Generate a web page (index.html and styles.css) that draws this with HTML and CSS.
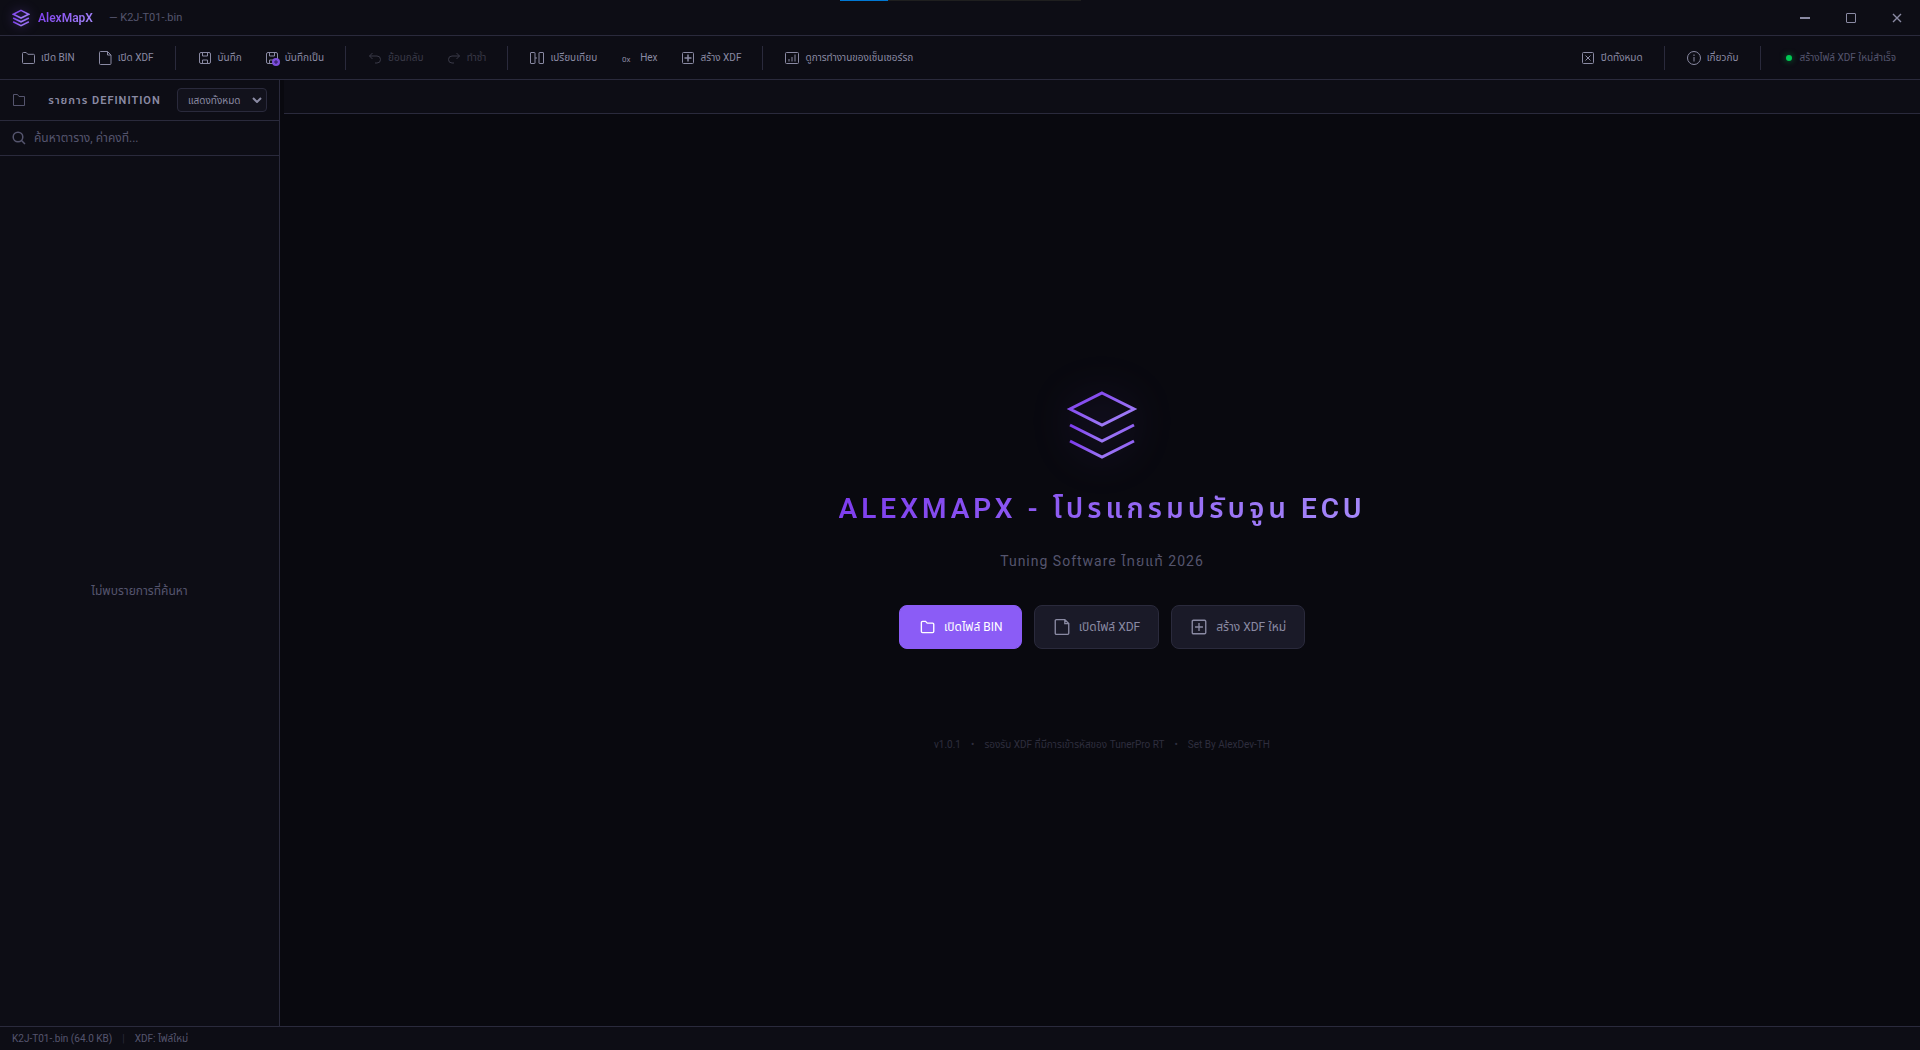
FILE: index.html
```html
<!DOCTYPE html>
<html lang="th">
<head>
    <meta charset="UTF-8">
    <meta name="viewport" content="width=device-width, initial-scale=1.0">
    <title>AlexMapX</title>
    <link rel="stylesheet" href="styles.css">
</head>
<body>
    <div class="capture-bar"><div class="capture-progress"></div></div>

    <header class="titlebar">
        <svg class="brand-logo" viewBox="0 0 80 80">
            <defs>
                <linearGradient id="brand" x1="0" y1="0" x2="1" y2="1">
                    <stop offset="0" stop-color="#7c3aed"/>
                    <stop offset="1" stop-color="#a78bfa"/>
                </linearGradient>
            </defs>
            <g fill="none" stroke="url(#brand)" stroke-width="7">
                <path d="M40 6L74 23L40 40L6 23Z"/>
                <path d="M5 40L40 57L75 40"/>
                <path d="M5 57L40 74L75 57"/>
            </g>
        </svg>
        <span class="brand-name">AlexMapX</span>
        <span class="file-name">— K2J-T01-.bin</span>
        <div class="window-controls">
            <button aria-label="ย่อ"><svg viewBox="0 0 10 10"><path d="M0 5H10" stroke-width="2"/></svg></button>
            <button aria-label="ขยาย"><svg viewBox="0 0 10 10"><rect x=".5" y=".5" width="9" height="9" rx=".5"/></svg></button>
            <button aria-label="ปิด"><svg viewBox="0 0 10 10"><path d="M1 1L9 9M9 1L1 9" stroke-width="1.4"/></svg></button>
        </div>
    </header>

    <nav class="toolbar">
        <button class="tool-btn">
            <svg viewBox="0 0 16 16"><path d="M2.500 3.500a1 1 0 0 1 1-1h2.700l1.600 1.800H13.500a1 1 0 0 1 1 1V12.500a1 1 0 0 1-1 1H3.500a1 1 0 0 1-1-1z"/></svg>
            เปิด BIN
        </button>
        <button class="tool-btn">
            <svg viewBox="0 0 16 16"><path d="M3.500 1.500h7L14 5V13.500a1 1 0 0 1-1 1H3.500a1 1 0 0 1-1-1v-11a1 1 0 0 1 1-1zM10.500 1.500V5H14"/></svg>
            เปิด XDF
        </button>
        <div class="divider"></div>
        <button class="tool-btn">
            <svg viewBox="0 0 16 16"><rect x="2.500" y="2.500" width="11" height="11" rx="1.500"/><path d="M5.500 2.500v3.500h5V2.500M5.500 13.500v-3.500h5v3.500"/></svg>
            บันทึก
        </button>
        <button class="tool-btn">
            <svg viewBox="0 0 16 16"><rect x="2.500" y="2.500" width="11" height="11" rx="1.500"/><path d="M5.500 2.500v3.500h5V2.500M5.500 13.500v-3.500h5v3.500"/><circle class="badge" cx="12" cy="12" r="4"/><path class="badge-plus" d="M12 10v4M10 12h4"/></svg>
            บันทึกเป็น
        </button>
        <div class="divider"></div>
        <button class="tool-btn" disabled>
            <svg viewBox="0 0 16 16"><path d="M5.500 3L2.500 6l3 3M2.500 6h7.500a3.500 3.500 0 0 1 0 7H8"/></svg>
            ย้อนกลับ
        </button>
        <button class="tool-btn" disabled>
            <svg viewBox="0 0 16 16"><path d="M10.500 3l3 3-3 3M13.500 6H6a3.500 3.500 0 0 0 0 7h2"/></svg>
            ทำซ้ำ
        </button>
        <div class="divider"></div>
        <button class="tool-btn">
            <svg viewBox="0 0 16 16"><rect x="1.500" y="2.500" width="4.500" height="11" rx=".5"/><rect x="10" y="2.500" width="4.500" height="11" rx=".5"/><path d="M6 8h2"/></svg>
            เปรียบเทียบ
        </button>
        <button class="tool-btn">
            <svg class="hex-icon" viewBox="0 0 16 16"><text x="3" y="12">0x</text></svg>
            Hex
        </button>
        <button class="tool-btn">
            <svg viewBox="0 0 16 16"><rect x="2.500" y="2.500" width="11" height="11" rx="1"/><path d="M8 4.500v7M4.500 8h7" stroke-width="1.500"/></svg>
            สร้าง XDF
        </button>
        <div class="divider"></div>
        <button class="tool-btn">
            <svg viewBox="0 0 16 16"><rect x="1.500" y="2.500" width="13" height="11" rx="1"/><path d="M5 11.500V9M8 11.500V7M11 11.500V4.500"/></svg>
            ดูการทำงานของเซ็นเซอร์รถ
        </button>

        <div class="toolbar-right">
            <button class="tool-btn">
                <svg viewBox="0 0 16 16"><rect x="2.500" y="2.500" width="11" height="11" rx="1"/><path d="M5.500 5.500l5 5M10.500 5.500l-5 5"/></svg>
                ปิดทั้งหมด
            </button>
            <div class="divider"></div>
            <button class="tool-btn">
                <svg viewBox="0 0 16 16"><circle cx="8" cy="8" r="6.500"/><path d="M8 7V11.500M8 4.500v1.500"/></svg>
                เกี่ยวกับ
            </button>
            <div class="divider"></div>
            <div class="status"><span class="status-dot"></span>สร้างไฟล์ XDF ใหม่สำเร็จ</div>
        </div>
    </nav>

    <div class="workspace">
        <aside class="sidebar">
            <div class="sidebar-header">
                <svg viewBox="0 0 14 14"><path d="M1.500 1.500H5.500L7 3.500H12.500V12.500H1.500z"/></svg>
                <h2>รายการ DEFINITION</h2>
                <div class="filter">
                    <select aria-label="ตัวกรอง"><option>แสดงทั้งหมด</option></select>
                    <svg viewBox="0 0 10 6"><path d="M1 1l4 4 4-4"/></svg>
                </div>
            </div>
            <label class="search">
                <svg viewBox="0 0 14 14"><circle cx="6" cy="6" r="4.800"/><path d="M9.500 9.500L13 13"/></svg>
                <input type="text" placeholder="ค้นหาตาราง, ค่าคงที่..." aria-label="ค้นหา">
            </label>
            <div class="empty">ไม่พบรายการที่ค้นหา</div>
        </aside>

        <main class="editor">
            <div class="tabs"></div>
            <section class="welcome">
                <svg class="welcome-logo" viewBox="0 0 80 80">
                    <g fill="none" stroke="url(#brand)" stroke-width="3">
                        <path d="M40 8L72 24L40 40L8 24Z"/>
                        <path d="M8 40L40 56L72 40"/>
                        <path d="M8 56L40 72L72 56"/>
                    </g>
                </svg>
                <h1>ALEXMAPX - โปรแกรมปรับจูน ECU</h1>
                <p class="subtitle">Tuning Software ไทยแท้ 2026</p>
                <div class="actions">
                    <button class="action-btn primary">
                        <svg viewBox="0 0 16 16"><path d="M3 4a1 1 0 0 1 1-1h2.700l1.500 1.600H13a1 1 0 0 1 1 1V12a1 1 0 0 1-1 1H4a1 1 0 0 1-1-1z"/></svg>
                        เปิดไฟล์ BIN
                    </button>
                    <button class="action-btn">
                        <svg viewBox="0 0 16 16"><path d="M3 1.500h7.500L14 5V13.500a1 1 0 0 1-1 1H3a1 1 0 0 1-1-1v-11a1 1 0 0 1 1-1zM10.500 1.500V5H14"/></svg>
                        เปิดไฟล์ XDF
                    </button>
                    <button class="action-btn">
                        <svg viewBox="0 0 16 16"><rect x="2" y="2" width="12" height="12" rx="1"/><path d="M8 4.500v7M4.500 8h7"/></svg>
                        สร้าง XDF ใหม่
                    </button>
                </div>
                <div class="version">
                    <span>v1.0.1</span><span>•</span><span>รองรับ XDF ที่มีการเข้ารหัสของ TunerPro RT</span><span>•</span><span>Set By AlexDev-TH</span>
                </div>
            </section>
        </main>
    </div>

    <footer class="statusbar">
        <span>K2J-T01-.bin (64.0 KB)</span>
        <span class="pipe">|</span>
        <span>XDF: ไฟล์ใหม่</span>
    </footer>
</body>
</html>
```
FILE: styles.css
```css
* {
    box-sizing: border-box;
}

body {
    margin: 0;
    height: 100vh;
    display: flex;
    flex-direction: column;
    background: #09090f;
    color: #8a8aa3;
    font-family: Roboto, "Noto Sans Thai", sans-serif;
    font-size: 10px;
    overflow: hidden;
}

button, input, select {
    font: inherit;
    color: inherit;
}

svg {
    flex-shrink: 0;
    fill: none;
    stroke: currentColor;
}

.capture-bar {
    position: absolute;
    top: 0;
    left: 840px;
    width: 241px;
    height: 1px;
    background: #1f1f1f;
}

.capture-progress {
    width: 20%;
    height: 1px;
    background: #0078d4;
}

.titlebar {
    display: flex;
    align-items: center;
    height: 36px;
    padding-left: 12px;
    background: #0d0d15;
    border-bottom: 1px solid #2a2a3c;
}

.brand-logo {
    width: 18px;
    height: 18px;
    filter: drop-shadow(0 0 6px rgba(139, 92, 246, 0.4));
}

.brand-name {
    margin-left: 8px;
    font-size: 12px;
    font-weight: 600;
    background: linear-gradient(135deg, #7c3aed, #a78bfa);
    -webkit-background-clip: text;
    background-clip: text;
    color: transparent;
}

.file-name {
    margin-left: 16px;
    font-size: 11px;
    color: #55556e;
}

.window-controls {
    display: flex;
    margin-left: auto;
    height: 100%;
}

.window-controls button {
    display: flex;
    align-items: center;
    justify-content: center;
    width: 46px;
    border: none;
    background: none;
}

.window-controls svg {
    width: 10px;
    height: 10px;
}

.toolbar {
    display: flex;
    align-items: center;
    gap: 6px;
    height: 44px;
    padding: 0 12px;
    background: #0d0d15;
    border-bottom: 1px solid #2a2a3c;
}

.tool-btn {
    display: flex;
    align-items: center;
    gap: 5px;
    height: 28px;
    padding: 0 8px;
    border: none;
    background: none;
    white-space: nowrap;
}

.tool-btn:disabled {
    color: #3a3a48;
}

.tool-btn svg {
    width: 16px;
    height: 16px;
}

.tool-btn .badge {
    fill: #7c4ddb;
    stroke: none;
}

.tool-btn .badge-plus {
    stroke: #2c1a5c;
}

.hex-icon text {
    font-size: 8px;
    fill: currentColor;
    stroke: none;
}

.divider {
    width: 1px;
    height: 24px;
    margin: 0 7px;
    background: #2a2a3c;
}

.toolbar-right {
    display: flex;
    align-items: center;
    gap: 6px;
    margin-left: auto;
}

.status {
    display: flex;
    align-items: center;
    gap: 8px;
    padding: 0 12px;
    color: #55556e;
}

.status-dot {
    width: 6px;
    height: 6px;
    border-radius: 50%;
    background: #00c853;
    box-shadow: 0 0 6px rgba(0, 200, 83, 0.6);
}

.workspace {
    display: flex;
    flex: 1;
    min-height: 0;
}

.sidebar {
    display: flex;
    flex-direction: column;
    width: 280px;
    background: #0d0d15;
    border-right: 1px solid #2a2a3c;
}

.sidebar-header {
    display: flex;
    align-items: center;
    justify-content: space-between;
    height: 41px;
    padding: 0 12px;
    border-bottom: 1px solid #2a2a3c;
}

.sidebar-header > svg {
    width: 14px;
    height: 14px;
    color: #55556e;
}

.sidebar-header h2 {
    margin: 0;
    padding-left: 6px;
    font-size: 11px;
    font-weight: 600;
    letter-spacing: 1px;
}

.filter {
    position: relative;
}

.filter select {
    width: 90px;
    height: 24px;
    padding: 0 10px;
    border: 1px solid #2a2a3c;
    border-radius: 4px;
    background: #12121c;
    appearance: none;
}

.filter svg {
    position: absolute;
    top: 9px;
    right: 5px;
    width: 10px;
    height: 6px;
    stroke-width: 2;
    pointer-events: none;
}

.search {
    display: flex;
    align-items: center;
    gap: 8px;
    height: 35px;
    padding: 0 12px;
    border-bottom: 1px solid #2a2a3c;
    color: #55556e;
    font-size: 12px;
}

.search svg {
    width: 14px;
    height: 14px;
    stroke-width: 1.5;
}

.search input {
    flex: 1;
    min-width: 0;
    padding: 0;
    border: none;
    outline: none;
    background: none;
}

.search input::placeholder {
    color: #55556e;
}

.empty {
    display: flex;
    flex: 1;
    align-items: center;
    justify-content: center;
    color: #55556e;
    font-size: 12px;
}

.editor {
    display: flex;
    flex: 1;
    flex-direction: column;
    margin-left: 4px;
}

.tabs {
    height: 34px;
    background: #0d0d15;
    border-bottom: 1px solid #2a2a3c;
}

.welcome {
    display: flex;
    flex: 1;
    flex-direction: column;
    align-items: center;
    justify-content: center;
}

.welcome-logo {
    width: 80px;
    height: 80px;
    filter: drop-shadow(0 0 20px rgba(139, 92, 246, 0.3));
}

.welcome h1 {
    margin: 20px 0 18px;
    font-size: 28px;
    line-height: 48px;
    font-weight: 600;
    letter-spacing: 4px;
    background: linear-gradient(135deg, #7c3aed, #a78bfa);
    -webkit-background-clip: text;
    background-clip: text;
    color: transparent;
}

.subtitle {
    margin: 0 0 34px;
    font-size: 14px;
    line-height: 20px;
    letter-spacing: 1px;
    color: #55556e;
}

.actions {
    display: flex;
    gap: 12px;
}

.action-btn {
    display: flex;
    align-items: center;
    gap: 8px;
    height: 44px;
    padding: 0 18px;
    border: 1px solid #2a2a3c;
    border-radius: 8px;
    background: #1a1a28;
    font-size: 12px;
}

.action-btn.primary {
    border-color: #8b5cf6;
    background: #8b5cf6;
    color: #fff;
}

.action-btn svg {
    width: 18px;
    height: 18px;
    stroke-width: 1.2;
}

.version {
    display: flex;
    gap: 10px;
    margin-top: 86px;
    line-height: 20px;
    color: #2e2e3e;
}

.statusbar {
    display: flex;
    align-items: center;
    gap: 10px;
    height: 24px;
    padding: 0 12px;
    background: #0d0d15;
    border-top: 1px solid #2a2a3c;
    color: #55556e;
}

.pipe {
    color: #2a2a3c;
}
```
